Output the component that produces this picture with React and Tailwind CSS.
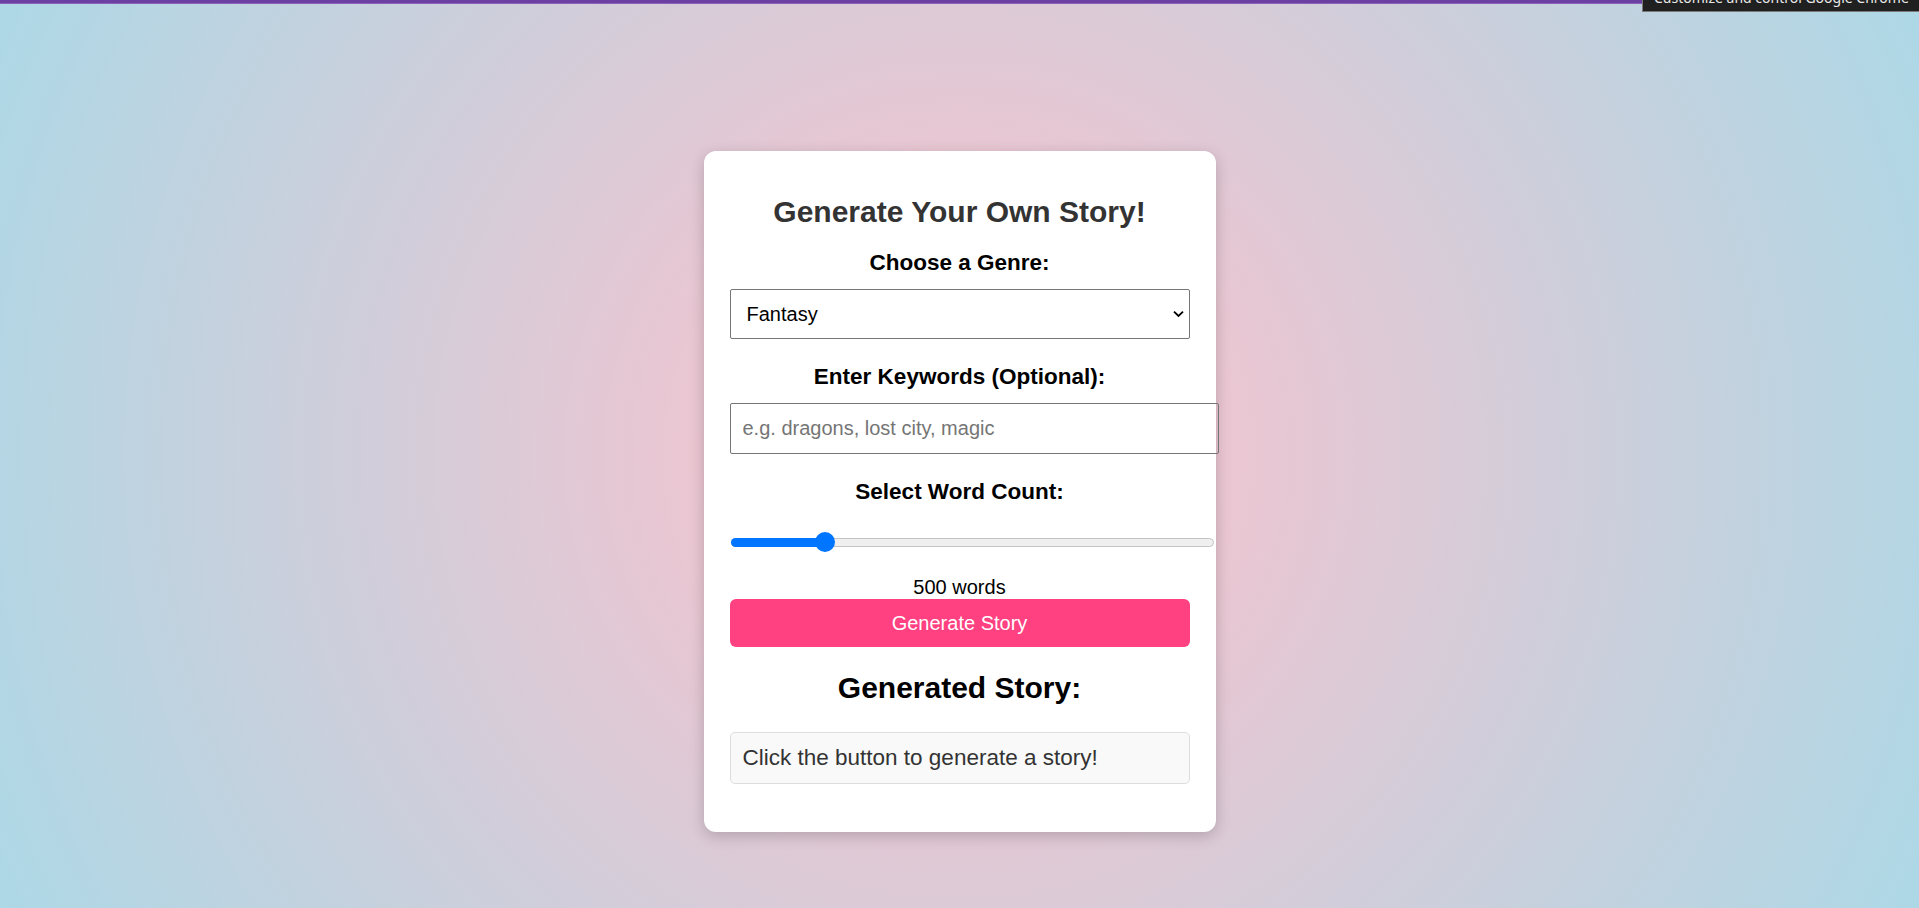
import React, { useState } from "react";

const genres = ["Fantasy", "Science Fiction", "Mystery", "Romance", "Horror", "Adventure"];

const App = () => {
    const [genre, setGenre] = useState("Fantasy");
    const [keywords, setKeywords] = useState("");
    const [wordCount, setWordCount] = useState(500);
    const [story, setStory] = useState("");

    const min = 100;
    const max = 2300;
    const ratio = (wordCount - min) / (max - min);

    // Build a small placeholder story from the inputs
    const generateStory = () => {
        const words = keywords.trim() ? ` featuring ${keywords.trim()}` : "";
        setStory(`A ${genre.toLowerCase()} tale of about ${wordCount} words${words} is on its way...`);
    };

    return (
        <div className="relative h-screen w-full overflow-hidden bg-[radial-gradient(circle,#ffc0cb,#add8e6)] font-['Liberation_Sans',Arial,sans-serif]">
            {/* Top bar */}
            <div className="h-[3px] bg-[#6c3fa3]" />
            <div className="h-px bg-[#8b62b8]" />

            {/* Browser tooltip */}
            <div className="absolute right-0 top-0 h-[12px] w-[277px] overflow-hidden border-b border-l border-[#7a7a7a] bg-[#202020] pl-[11px]">
                <div className="-mt-[9px] whitespace-nowrap font-['Noto_Sans',sans-serif] text-[14px] leading-[14px] text-[#e8e8e8]">
                    Customize and control Google Chrome
                </div>
            </div>

            <div className="flex justify-center pt-[147px]">
                <div className="w-[512px] rounded-[12px] bg-white px-[26px] pt-[44px] pb-[48px] text-center shadow-[0_4px_15px_rgba(0,0,0,0.2)]">
                    <h1 className="text-[30px] font-bold leading-[34px] text-[#333]">Generate Your Own Story!</h1>

                    <label className="mt-[21px] block text-[22.5px] font-bold leading-[26px] text-black">Choose a Genre:</label>
                    <div className="relative mt-[13px]">
                        <select
                            value={genre}
                            onChange={(e) => setGenre(e.target.value)}
                            className="block h-[50px] w-full appearance-none rounded-[2px] border border-[#767676] bg-white pl-[16px] text-[20px] text-black outline-none"
                        >
                            {genres.map((g) => (
                                <option key={g} value={g}>
                                    {g}
                                </option>
                            ))}
                        </select>
                        <svg className="pointer-events-none absolute right-[6px] top-1/2 -translate-y-1/2" width="11" height="7" viewBox="0 0 11 7" fill="none">
                            <path d="M1 1.2L5.5 5.5L10 1.2" stroke="#000" strokeWidth="1.8" />
                        </svg>
                    </div>

                    <label className="mt-[25px] block text-[22.5px] font-bold leading-[26px] text-black">Enter Keywords (Optional):</label>
                    <input
                        type="text"
                        value={keywords}
                        onChange={(e) => setKeywords(e.target.value)}
                        placeholder="e.g. dragons, lost city, magic"
                        className="mt-[13px] block h-[51px] w-[489px] rounded-[2px] border border-[#767676] px-[12px] text-[20px] text-black outline-none placeholder:text-[#757575]"
                    />

                    <label className="mt-[25px] block text-[22.5px] font-bold leading-[26px] text-black">Select Word Count:</label>
                    <div className="relative mt-[27px] ml-px flex h-[20px] w-[483px] items-center">
                        <div className="relative h-[9px] w-full rounded-full border border-[#c4c4c4] bg-[#efefef]">
                            <div className="absolute -left-px -top-px h-[9px] rounded-full bg-[#0075ff]" style={{ width: `${9.5 + ratio * 464}px` }} />
                        </div>
                        <div className="absolute top-0 h-[20px] w-[20px] rounded-full bg-[#0075ff]" style={{ left: `${ratio * 464}px` }} />
                        <input
                            type="range"
                            min={min}
                            max={max}
                            step={100}
                            value={wordCount}
                            onChange={(e) => setWordCount(Number(e.target.value))}
                            className="absolute inset-0 h-full w-full cursor-pointer opacity-0"
                        />
                    </div>
                    <p className="mt-[24px] text-[20px] leading-[22px] text-black">{wordCount} words</p>

                    <button
                        onClick={generateStory}
                        className="mt-[1px] block h-[48px] w-full rounded-[6px] bg-[#ff4081] text-[20px] text-white"
                    >
                        Generate Story
                    </button>

                    <h2 className="mt-[24px] text-[30px] font-bold leading-[34px] text-black">Generated Story:</h2>
                    <div className="mt-[27px] min-h-[52px] rounded-[5px] border border-[#dddddd] bg-[#f9f9f9] px-[12px] text-left text-[22.5px] leading-[50px] text-[#333]">
                        {story || "Click the button to generate a story!"}
                    </div>
                </div>
            </div>
        </div>
    );
};

export default App;
